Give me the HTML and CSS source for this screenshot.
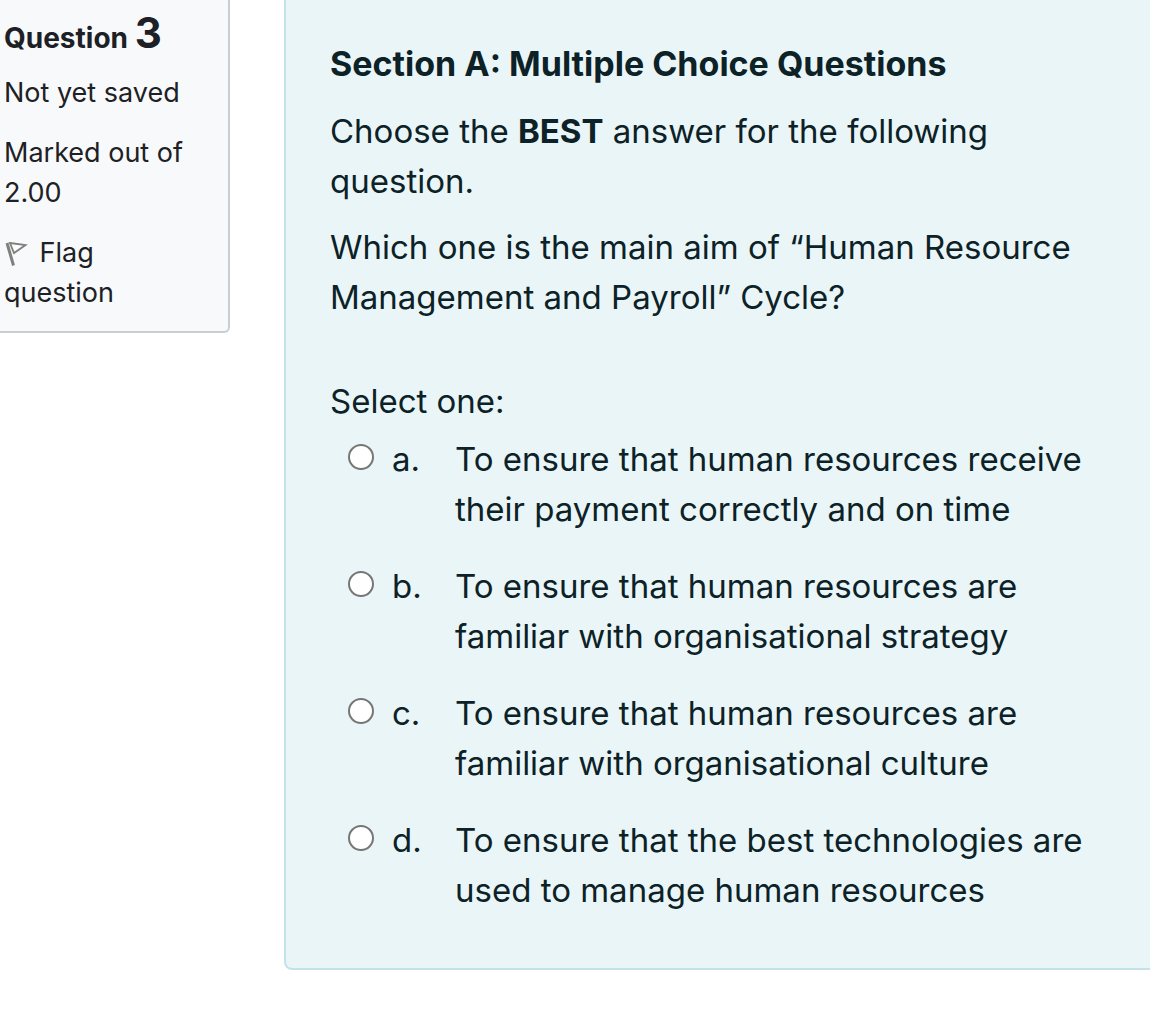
FILE: index.html
```html
<!DOCTYPE html>
<html lang="en">
<head>
    <meta charset="UTF-8">
    <meta name="viewport" content="width=device-width, initial-scale=1.0">
    <title>Question 3</title>
    <link rel="stylesheet" href="styles.css">
</head>
<body>
    <main class="question">
        <aside class="info">
            <h3 class="number">Question <span class="qno">3</span></h3>
            <p class="state">Not yet saved</p>
            <p class="grade">Marked out of 2.00</p>
            <a href="#" class="flag">
                <svg class="flag-icon" width="24" height="26" viewBox="0 0 24 26" aria-hidden="true">
                    <path d="M3 2 L9.5 24.5" fill="none" stroke="#80807e" stroke-width="3"/>
                    <path d="M6 2 L21.5 4 L10 12 Z" fill="#fff" stroke="#80807e" stroke-width="1.8"/>
                </svg>
                Flag question
            </a>
        </aside>
        <form class="formulation">
            <div class="qtext">
                <h4>Section A: Multiple Choice Questions</h4>
                <p>Choose the <strong>BEST</strong> answer for the following question.</p>
                <p>Which one is the main aim of “Human Resource Management and Payroll” Cycle?</p>
            </div>
            <fieldset class="answers">
                <legend>Select one:</legend>
                <div class="answer">
                    <input type="radio" name="answer" id="answer-a">
                    <label for="answer-a"><span class="letter">a.</span><span>To ensure that human resources receive their payment correctly and on time</span></label>
                </div>
                <div class="answer">
                    <input type="radio" name="answer" id="answer-b">
                    <label for="answer-b"><span class="letter">b.</span><span>To ensure that human resources are familiar with organisational strategy</span></label>
                </div>
                <div class="answer">
                    <input type="radio" name="answer" id="answer-c">
                    <label for="answer-c"><span class="letter">c.</span><span>To ensure that human resources are familiar with organisational culture</span></label>
                </div>
                <div class="answer">
                    <input type="radio" name="answer" id="answer-d">
                    <label for="answer-d"><span class="letter">d.</span><span>To ensure that the best technologies are used to manage human resources</span></label>
                </div>
            </fieldset>
        </form>
    </main>
</body>
</html>
```
FILE: styles.css
```css
* {
    box-sizing: border-box;
    margin: 0;
    padding: 0;
}

body {
    background: #fff;
    color: #1d2125;
    font-family: Inter, "Liberation Sans", sans-serif;
}

.question {
    display: grid;
    grid-template-columns: 230px 1fr;
    gap: 54px;
    align-items: start;
}

.info {
    padding: 12px 24px 18px 4px;
    background: #f8f9fb;
    border: 2px solid #cacdd6;
    border-width: 0 2px 2px 0;
    border-radius: 0 0 6px 0;
    font-size: 27px;
    line-height: 40px;
}

.number {
    font-size: 28px;
    line-height: 42px;
    margin-bottom: 14px;
}

.qno {
    font-size: 42px;
}

.state,
.grade {
    margin-bottom: 20px;
}

.flag {
    color: inherit;
    text-decoration: none;
}

.flag-icon {
    margin-right: 4px;
    vertical-align: -5px;
}

.formulation {
    padding: 39px 44px 26px;
    background: #eaf5f8;
    border: 2px solid #c3e2e9;
    border-width: 0 0 2px 2px;
    border-radius: 0 0 0 8px;
    color: #0c2227;
    font-size: 33px;
    line-height: 50px;
}

.qtext h4 {
    font-size: 34px;
    margin-bottom: 17px;
}

.qtext p {
    margin-bottom: 16px;
}

.answers {
    margin-top: 54px;
    border: none;
}

.answers legend {
    margin-bottom: 8px;
}

.answer {
    display: flex;
    gap: 18px;
    padding-left: 18px;
    margin-bottom: 27px;
}

.answer input {
    appearance: none;
    flex: none;
    width: 26px;
    height: 26px;
    margin-top: 10px;
    border: 2px solid #767676;
    border-radius: 50%;
    background: #fff;
}

.answer input:checked {
    background: radial-gradient(#0f6cbf 45%, #fff 50%);
}

.answer label {
    display: flex;
}

.letter {
    flex: none;
    width: 63px;
}
```
